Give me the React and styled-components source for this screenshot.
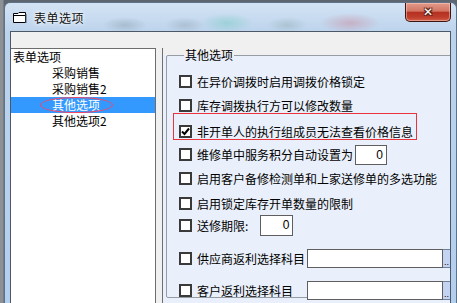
import React from 'react'
import styled, { createGlobalStyle } from 'styled-components'

const GlobalStyle = createGlobalStyle`
    html, body {
        margin: 0;
        padding: 0;
        overflow: hidden;
    }
    body {
        font-family: "Noto Sans CJK SC", "Liberation Sans", sans-serif;
        font-size: 12px;
        color: #000;
    }
`;

const Desktop = styled.div`
    width: 457px;
    height: 303px;
    display: flex;
    padding-left: 4px;
    box-sizing: border-box;
    background: linear-gradient(90deg, #8d9196 0px, #8d9196 3px, #5d6670 4px);
    overflow: hidden;
`;

const Window = styled.div`
    width: 453px;
    margin-top: 2px;
    display: flex;
    flex-direction: column;
    box-sizing: border-box;
    border: 1px solid #5f7388;
    border-bottom: none;
    border-radius: 6px 6px 0 0;
    padding: 0 5px;
    background:
        radial-gradient(ellipse 22px 8px at 120px 22px, rgba(120,140,150,0.35), transparent),
        radial-gradient(ellipse 20px 8px at 180px 22px, rgba(120,140,150,0.3), transparent),
        radial-gradient(ellipse 26px 10px at 222px 20px, rgba(110,200,190,0.45), transparent),
        radial-gradient(ellipse 20px 8px at 282px 22px, rgba(120,150,150,0.3), transparent),
        radial-gradient(ellipse 30px 10px at 345px 20px, rgba(200,130,150,0.45), transparent),
        linear-gradient(180deg, #d3e3f4 0px, #bcd3ec 30px, #b3cfee 100%);
`;

const TitleBar = styled.div`
    height: 28px;
    display: grid;
    grid-template-columns: 17px auto 1fr 46px;
    align-items: start;
`;

const TitleIcon = styled.svg`
    margin: 9px 0 0 3px;
`;

const TitleText = styled.span`
    margin: 7px 0 0 7px;
    font-size: 12px;
    line-height: 16px;
    letter-spacing: 0.5px;
    color: #101010;
    text-shadow: 0 0 6px #fff, 0 0 3px #fff;
`;

const CloseButton = styled.div`
    grid-column: 4;
    height: 19px;
    box-sizing: border-box;
    border: 1px solid #3d1510;
    border-top: none;
    border-radius: 0 0 5px 5px;
    background: linear-gradient(180deg, #e39a8a 0%, #d27563 45%, #b53020 52%, #bf3f2c 80%, #d2604a 100%);
    box-shadow: inset 0 0 0 1px rgba(255,210,200,0.5);
    display: flex;
    align-items: center;
    justify-content: center;
    color: #fff;
    font-family: "DejaVu Sans", sans-serif;
    font-weight: bold;
    font-size: 12px;
    line-height: 12px;
    text-shadow: 1px 1px 0 #5a2018, -1px -1px 0 #5a2018, 1px -1px 0 #5a2018, -1px 1px 0 #5a2018;
`;

const Client = styled.div`
    flex: 1;
    display: flex;
    align-items: flex-start;
    border: 1px solid #4c5866;
    border-bottom: none;
    background: #f0f0f0;
    overflow: hidden;
`;

const Tree = styled.div`
    margin-top: 16px;
    width: 144px;
    height: 260px;
    flex-shrink: 0;
    background: #fff;
    border-top: 1px solid #6d6d6d;
    border-right: 1px solid #6d6d6d;
`;

const TreeItem = styled.div`
    position: relative;
    height: 16px;
    line-height: 16px;
    padding-left: ${p => p.$indent}px;
    background: ${p => (p.$selected ? '#3399ff' : 'transparent')};
    color: ${p => (p.$selected ? '#fff' : '#000')};
    white-space: nowrap;
`;

const Ellipse = styled.span`
    position: absolute;
    left: 29px;
    top: 0;
    width: 73px;
    height: 16px;
    border: 1px solid #f0486a;
    border-radius: 50%;
    box-sizing: border-box;
`;

const Panel = styled.div`
    margin: 16px 0 0 6px;
    flex-shrink: 0;
    width: 300px;
    height: 260px;
    padding-left: 3px;
    background: linear-gradient(180deg, #f0f0f0 0px, #f0f0f0 7px, #eaf0fb 7px);
    border-left: 1px solid #6f6f6f;
`;

const GroupBox = styled.fieldset`
    margin: 0;
    padding: 0 0 0 12px;
    min-width: 0;
    height: 250px;
    box-sizing: border-box;
    border: 1px solid #959ca4;
    border-radius: 2px;
`;

const Legend = styled.legend`
    margin-left: 5px;
    padding: 0 1px;
    line-height: 14px;
    font-size: 12px;
`;

const Row = styled.div`
    position: relative;
    display: flex;
    align-items: center;
    height: 13px;
    margin-top: ${p => p.$mt}px;
    white-space: nowrap;
`;

const Box = styled.span`
    width: 13px;
    height: 13px;
    box-sizing: border-box;
    flex-shrink: 0;
    border: 2px solid #3a3a3a;
    background: #fff;
    display: flex;
    align-items: center;
    justify-content: center;
`;

const Label = styled.span`
    margin-left: 5px;
    line-height: 14px;
    width: ${p => (p.$w ? p.$w + 'px' : 'auto')};
    flex-shrink: 0;
`;

const NumInput = styled.div`
    margin-left: ${p => p.$ml}px;
    width: ${p => p.$w}px;
    height: ${p => p.$h}px;
    box-sizing: border-box;
    flex-shrink: 0;
    border: 1px solid #5e5e5e;
    background: #fff;
    text-align: right;
    padding-right: 3px;
    line-height: ${p => p.$h - 2}px;
    font-family: "Liberation Sans", sans-serif;
    font-size: 12px;
`;

const BrowseButton = styled.div`
    width: 12px;
    height: 19px;
    box-sizing: border-box;
    flex-shrink: 0;
    background: #c3d3f2;
    border: 1px solid #6f7f99;
    border-left: none;
    font-family: "Liberation Sans", sans-serif;
    font-size: 9px;
    line-height: 24px;
    padding-left: 1px;
`;

const Highlight = styled.span`
    position: absolute;
    left: -6px;
    top: -12px;
    width: 244px;
    height: 27px;
    border: 1px solid #e8343a;
    box-sizing: border-box;
    pointer-events: none;
`;

const options = [
    { text: '在异价调拨时启用调拨价格锁定', mt: 13 },
    { text: '库存调拨执行方可以修改数量', mt: 11 },
    { text: '非开单人的执行组成员无法查看价格信息', mt: 13, checked: true, mark: true },
    { text: '维修单中服务积分自动设置为', mt: 10, num: { ml: 2, w: 32, h: 20 } },
    { text: '启用客户备修检测单和上家送修单的多选功能', mt: 11 },
    { text: '启用锁定库存开单数量的限制', mt: 12 },
    { text: '送修期限:', mt: 9, num: { ml: 12, w: 33, h: 21 } },
    { text: '供应商返利选择科目', mt: 20, browse: true },
    { text: '客户返利选择科目', mt: 19, browse: true },
];

function Check({ checked }) {
    return (
        <Box>
            {checked && (
                <svg width="9" height="9" viewBox="0 0 9 9">
                    <path d="M1 4.5 L3.5 7 L8 1.5" fill="none" stroke="#000" strokeWidth="2" />
                </svg>
            )}
        </Box>
    )
}

export default function App() {
    return (
        <Desktop>
            <GlobalStyle />
            <Window>
                <TitleBar>
                    <TitleIcon width="14" height="11" viewBox="0 0 14 11">
                        <path d="M0.5 1.5 H5 L6 0.5 H12.5 V10.5 H0.5 Z" fill="#fff" stroke="#000" />
                        <path d="M0.5 3.5 H12.5" stroke="#000" />
                        <rect x="12.5" y="2" width="1" height="9" fill="#4a5a6a" />
                    </TitleIcon>
                    <TitleText>表单选项</TitleText>
                    <CloseButton>✕</CloseButton>
                </TitleBar>
                <Client>
                    <Tree>
                        <TreeItem $indent={2}>表单选项</TreeItem>
                        <TreeItem $indent={41}>采购销售</TreeItem>
                        <TreeItem $indent={41}>采购销售2</TreeItem>
                        <TreeItem $indent={41} $selected>
                            其他选项
                            <Ellipse />
                        </TreeItem>
                        <TreeItem $indent={41}>其他选项2</TreeItem>
                    </Tree>
                    <Panel>
                        <GroupBox>
                            <Legend>其他选项</Legend>
                            {options.map(o => (
                                <Row key={o.text} $mt={o.mt}>
                                    <Check checked={o.checked} />
                                    <Label $w={o.browse ? 110 : 0}>{o.text}</Label>
                                    {o.num && (
                                        <NumInput $ml={o.num.ml} $w={o.num.w} $h={o.num.h}>0</NumInput>
                                    )}
                                    {o.browse && (
                                        <>
                                            <NumInput $ml={0} $w={136} $h={19} />
                                            <BrowseButton>..</BrowseButton>
                                        </>
                                    )}
                                    {o.mark && <Highlight />}
                                </Row>
                            ))}
                        </GroupBox>
                    </Panel>
                </Client>
            </Window>
        </Desktop>
    )
}
